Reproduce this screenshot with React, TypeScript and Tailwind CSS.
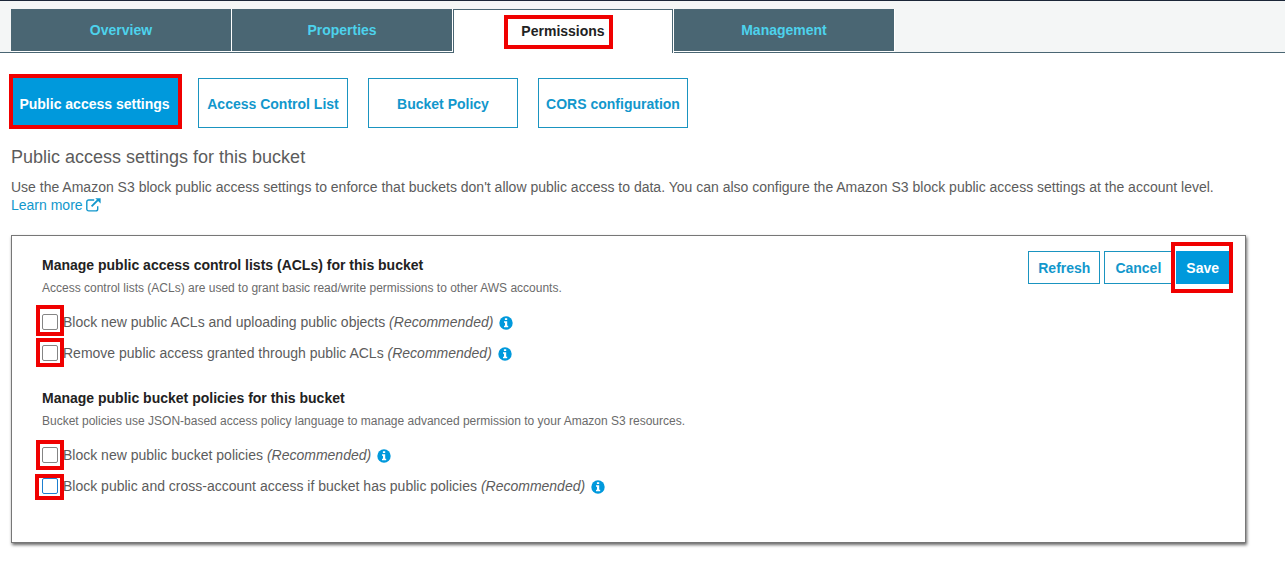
import React from 'react';

const tabs = ['Overview', 'Properties', 'Permissions', 'Management'];

const sections = [
  { label: 'Public access settings', active: true },
  { label: 'Access Control List', active: false },
  { label: 'Bucket Policy', active: false },
  { label: 'CORS configuration', active: false },
];

type Option = { id: string; text: string; focused?: boolean; mark: string };

const aclOptions: Option[] = [
  { id: 'block-acls', text: 'Block new public ACLs and uploading public objects', mark: '-left-[6px] -top-[9px] h-[31px] w-[28px]' },
  { id: 'remove-acls', text: 'Remove public access granted through public ACLs', mark: '-left-[6px] -top-[7px] h-[29px] w-[28px]' },
];

const policyOptions: Option[] = [
  { id: 'block-policies', text: 'Block new public bucket policies', mark: '-left-[6px] -top-[7px] h-[30px] w-[28px]' },
  { id: 'block-cross', text: 'Block public and cross-account access if bucket has public policies', focused: true, mark: '-left-[7px] -top-[4px] h-[26px] w-[29px]' },
];

/* Red annotation frame laid over a control */
function Mark({ className }: { className: string }) {
  return <span aria-hidden="true" className={`pointer-events-none absolute border-4 border-[#f00000] ${className}`} />;
}

function ExternalIcon() {
  return (
    <svg viewBox="0 0 15 14" className="inline-block h-[14px] w-[15px] align-[-2px]" fill="none" stroke="currentColor" strokeWidth="1.4" aria-hidden="true">
      <path d="M8.2 2H2.7A1.9 1.9 0 0 0 .8 3.900V11a1.900 1.900 0 0 0 1.900 1.900h7.100A1.900 1.900 0 0 0 11.700 11V8.200" />
      <path d="M5.600 8.400 12.300 1.700" strokeWidth="1.900" />
      <path d="M9.300.3h5.300v5.300z" fill="currentColor" stroke="none" />
    </svg>
  );
}

function InfoIcon() {
  return (
    <svg viewBox="0 0 14 14" className="h-[14px] w-[14px]" aria-hidden="true">
      <circle cx="7" cy="7" r="6.700" fill="#0099dc" />
      <path fill="#fff" d="M5.900 2.300h2.300v1.800H5.900zM5 5.200h3.200v4.500h1v1.500H5V9.700h1V6.700H5z" />
    </svg>
  );
}

function OptionRow({ option }: { option: Option }) {
  return (
    <div className="flex h-[31px] items-center">
      <span className="relative flex">
        <input
          id={option.id}
          type="checkbox"
          className={`h-4 w-4 appearance-none rounded-[2px] border bg-white checked:bg-[#0099dc] ${option.focused ? 'border-[#1d7fd0]' : 'border-[#858585]'}`}
        />
        <Mark className={option.mark} />
      </span>
      <label htmlFor={option.id} className="ml-[5px]">
        {option.text} <em>(Recommended)</em>
      </label>
      <button type="button" aria-label="More information" className="ml-[6px] mt-[2px]">
        <InfoIcon />
      </button>
    </div>
  );
}

function OptionGroup({ title, description, options }: { title: string; description: string; options: Option[] }) {
  return (
    <section>
      <h3 className="font-bold leading-[18px] text-[#222]">{title}</h3>
      <p className="mb-[9px] mt-[5px] text-[12px] leading-[18px] text-[#6b6b6b]">{description}</p>
      {options.map((o) => (
        <OptionRow key={o.id} option={o} />
      ))}
    </section>
  );
}

const outline = 'border border-[#1a94c0] bg-white font-bold text-[#1297cc]';

export default function App() {
  return (
    <div className="bg-white font-['Liberation_Sans',Arial,sans-serif] text-[14px] leading-[18px] text-[#5c5c5c]">
      <header className="border-b border-t border-b-[#4a6673] border-t-[#1b2638] bg-[#f4f6f6] pl-[11px] pt-2">
        <nav className="flex items-start">
          {tabs.map((tab) =>
            tab === 'Permissions' ? (
              <div key={tab} className="-mb-px h-[44px] w-[221px] border-r border-white">
                <button type="button" aria-current="page" className="h-full w-full border-x border-t border-[#4a6673] bg-white pb-[2px] font-bold text-[#222]">
                  <span className="relative">
                    {tab}
                    <Mark className="-left-[17px] -top-[8px] h-[34px] w-[109px]" />
                  </span>
                </button>
              </div>
            ) : (
              <button key={tab} type="button" className="h-[43px] w-[221px] border-b border-r border-white bg-[#4a6673] font-bold text-[#4dd2ec]">
                {tab}
              </button>
            ),
          )}
        </nav>
      </header>

      <main className="pb-6 pl-[11px] pr-[39px] pt-[25px]">
        <nav className="flex gap-5">
          {sections.map((s) =>
            s.active ? (
              <button key={s.label} type="button" className="relative h-[50px] w-[167px] pt-[2px] font-bold text-white">
                <span className="absolute inset-0 bottom-[2px] bg-[#0099dc]" />
                <span className="relative whitespace-nowrap">{s.label}</span>
                <Mark className="-bottom-px -left-[2px] -right-1 -top-1" />
              </button>
            ) : (
              <button key={s.label} type="button" className={`h-[50px] w-[150px] whitespace-nowrap pt-[2px] ${outline}`}>
                {s.label}
              </button>
            ),
          )}
        </nav>

        <h2 className="mt-[17px] text-[18px] leading-6">Public access settings for this bucket</h2>
        <p className="mt-[9px]">
          Use the Amazon S3 block public access settings to enforce that buckets don't allow public access to data. You can also configure the Amazon S3 block public access settings at the account level.{' '}
          <a href="#learn-more" className="block text-[#1297cc]">
            Learn more <ExternalIcon />
          </a>
        </p>

        <div className="mt-[21px] flex items-start justify-between border border-[#777] pb-[41px] pl-[30px] pr-4 shadow-[1px_2px_3px_0px_rgba(0,0,0,0.6)]">
          <div className="flex flex-col gap-[21px] pt-5">
            <OptionGroup
              title="Manage public access control lists (ACLs) for this bucket"
              description="Access control lists (ACLs) are used to grant basic read/write permissions to other AWS accounts."
              options={aclOptions}
            />
            <OptionGroup
              title="Manage public bucket policies for this bucket"
              description="Bucket policies use JSON-based access policy language to manage advanced permission to your Amazon S3 resources."
              options={policyOptions}
            />
          </div>
          <div className="flex gap-1 pt-[15px]">
            <button type="button" className={`h-[33px] px-[9px] ${outline}`}>Refresh</button>
            <button type="button" className={`h-[33px] px-[10px] ${outline}`}>Cancel</button>
            <button type="button" className="relative h-[33px] bg-[#0099dc] px-[10px] font-bold text-white">
              Save
              <Mark className="-bottom-[9px] -left-[5px] -right-1 -top-[9px]" />
            </button>
          </div>
        </div>
      </main>
    </div>
  );
}
